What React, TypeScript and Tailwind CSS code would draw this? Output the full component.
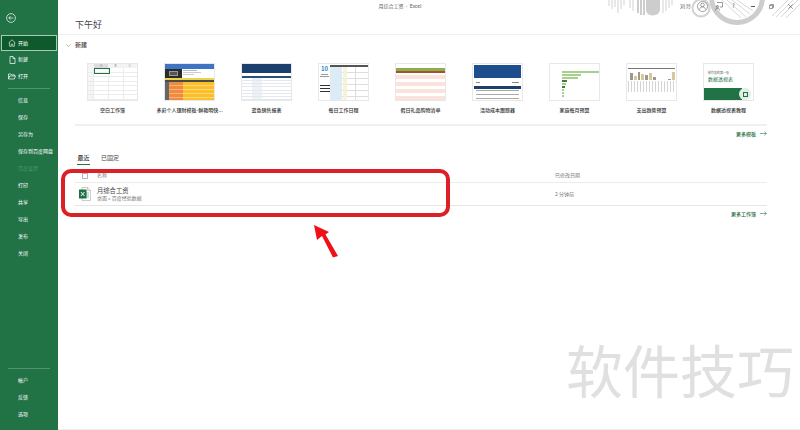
const cjk = "font-['Noto_Sans_CJK_SC','Noto_Sans',sans-serif]";

const topNav = ["新建", "打开"];
const midNav = ["信息", "保存", "另存为", "保存到百度网盘", "百度设置", "打印", "共享", "导出", "发布", "关闭"];
const bottomNav = ["帐户", "反馈", "选项"];

function Thumb({ children }: { children: React.ReactNode }) {
  return <div className="h-[38px] w-[51px] overflow-hidden border border-[#e8e8e8] bg-white">{children}</div>;
}

function BlankSheet() {
  return (
    <div className="relative flex h-full flex-col bg-white text-[3px] leading-[4px] text-[#888]">
      <div className="flex h-[4px] bg-[#f3f3f3] pl-[6px]">
        <span className="w-[15px] bg-[#dcdcdc] text-center">A</span>
        <span className="w-[15px] text-center">B</span>
        <span className="w-[15px] text-center">C</span>
      </div>
      <div className="grid flex-1 grid-cols-[6px_15px_15px_15px] grid-rows-7">
        {Array.from({ length: 28 }).map((_, i) => (
          <div key={i} className={`border-b border-r border-[#ececec] ${i % 4 === 0 ? "bg-[#f5f5f5]" : "bg-white"}`} />
        ))}
      </div>
      <div className="absolute left-[6px] top-[4px] h-[6px] w-[16px] border border-[#217346]" />
    </div>
  );
}

function BudgetSheet() {
  return (
    <div className="flex h-full flex-col bg-white">
      <div className="h-[5px] bg-[#3f73c4]" />
      <div className="flex h-[9px]">
        <div className="flex w-[17px] items-center justify-center bg-[#2b2b2b]">
          <div className="h-[5px] w-[9px] border border-[#999] bg-[#555]" />
        </div>
        <div className="flex flex-1 flex-col gap-px p-[1px]">
          <div className="h-px w-[14px] bg-[#bbb]" />
          <div className="h-px w-[18px] bg-[#ccc]" />
          <div className="h-px w-[11px] bg-[#ccc]" />
        </div>
      </div>
      <div className="h-[2px] bg-[#e9d44c]" />
      <div className="h-[2px] bg-[#4a4a4a]" />
      <div className="flex flex-1">
        <div className="w-[4px] bg-[#666]" />
        <div className="w-[14px] bg-[repeating-linear-gradient(180deg,#f08a3c_0,#f08a3c_3px,#f7b183_3px,#f7b183_4px)]" />
        <div className="flex-1 bg-[repeating-linear-gradient(180deg,#fbbf2c_0,#fbbf2c_3px,#fcd877_3px,#fcd877_4px)]" />
      </div>
    </div>
  );
}

function BlueReport() {
  return (
    <div className="flex h-full flex-col bg-white">
      <div className="h-[9px] bg-[#1c3f6e]" />
      <div className="h-[3px]" />
      <div className="h-[2px] bg-[#28507f]" />
      <div className="grid flex-1 grid-cols-5 grid-rows-7">
        {Array.from({ length: 35 }).map((_, i) => (
          <div key={i} className={`border-b border-[#e4e9f0] ${i % 5 === 1 ? "bg-[#eef1f5]" : ""}`} />
        ))}
      </div>
    </div>
  );
}

function DailySchedule() {
  return (
    <div className="flex h-full bg-white">
      <div className="flex w-[11px] flex-col items-center pt-[1px]">
        <span className="text-[6px] font-bold leading-[8px] text-[#1e88d0]">10</span>
        <div className="mt-[1px] h-px w-[7px] bg-[#999]" />
        <div className="mt-[1px] h-px w-[9px] bg-[#999]" />
        <div className="mt-[8px] h-px w-[10px] bg-[#333]" />
        <div className="mt-[2px] h-px w-[10px] bg-[#333]" />
        <div className="mt-[2px] h-px w-[10px] bg-[#333]" />
      </div>
      <div className="flex flex-1 flex-col pt-[1px]">
        <div className="h-[2px] bg-[#555]" />
        <div className="flex flex-1 bg-[repeating-linear-gradient(180deg,#fff_0,#fff_5px,#dddddd_5px,#dddddd_6px)]">
          <div className="w-[12px] bg-[#dcebf6]" />
          <div className="ml-[1px] w-[4px] bg-[#f5f3d8]" />
          <div className="ml-[8px] w-px bg-[#ddd]" />
        </div>
      </div>
    </div>
  );
}

function GiftList() {
  return (
    <div className="flex h-full flex-col bg-white pt-[4px]">
      <div className="h-[3px] bg-[#8ab04e]" />
      <div className="h-[2px] bg-[#a8502e]" />
      <div className="h-[2px]" />
      {Array.from({ length: 7 }).map((_, i) => (
        <div key={i} className={`h-[3.5px] ${i % 2 === 0 ? "bg-[#fbe3dd]" : "bg-white"}`} />
      ))}
    </div>
  );
}

function CostTracker() {
  return (
    <div className="flex h-full flex-col bg-white px-px pt-px">
      <div className="h-[13px] bg-[#1f4e8c]" />
      <div className="flex h-[8px] items-center justify-between px-[2px]">
        <div className="h-px w-[4px] bg-[#888]" />
        <div className="h-px w-[7px] bg-[#888]" />
      </div>
      <div className="h-[3px] bg-[#1c3f6e]" />
      <div className="flex flex-1 flex-col justify-around px-[2px]">
        <div className="h-px w-full bg-[#aaa]" />
        <div className="h-px w-full bg-[#aaa]" />
        <div className="h-px w-full bg-[#aaa]" />
      </div>
    </div>
  );
}

function BudgetChart() {
  const bars = [48, 24, 20, 6, 5, 4, 3, 3, 2];
  return (
    <div className="flex h-full flex-col bg-white pl-[12px] pt-[7px]">
      {bars.map((w, i) => (
        <div
          key={i}
          className={`mb-px h-[2px] ${i === 3 || i === 5 ? "bg-[#3f7d3a]" : "bg-[#a9cf8e]"}`}
          style={{ width: w * 0.78 }}
        />
      ))}
    </div>
  );
}

function TrendChart() {
  const bars = [7, 4, 8, 6, 5, 7, 3, 0, 0, 0, 1, 8];
  return (
    <div className="flex h-full flex-col bg-white px-[1px] pt-[4px]">
      <div className="h-px bg-[#777]" />
      <div className="flex h-[11px] items-end gap-px pl-[2px]">
        {bars.map((h, i) => (
          <div key={i} className={`w-[3px] ${i % 2 === 0 ? "bg-[#9a9a8c]" : "bg-[#d8c79d]"}`} style={{ height: h }} />
        ))}
      </div>
      <div className="mt-px h-[11px] bg-[repeating-linear-gradient(90deg,#d4d4d4_0,#d4d4d4_1px,#fff_1px,#fff_3px)]" />
    </div>
  );
}

function PivotTutorial() {
  return (
    <div className={`relative flex h-full flex-col bg-white ${cjk}`}>
      <div className="px-[4px] pt-[7px] text-[3px] leading-[4px] text-[#666]">制作您的第一张</div>
      <div className="px-[4px] text-[5px] leading-[7px] text-[#217346]">数据透视表</div>
      <div className="mt-auto h-[12px] w-[38px] bg-[#217346]" />
      <div className="absolute bottom-0 left-[35px] flex h-[12px] w-[12px] items-center justify-center rounded-full bg-[#dfeee6]">
        <div className="h-[5px] w-[5px] border border-[#217346]" />
      </div>
    </div>
  );
}

const templates = [
  { name: "空白工作簿", view: <BlankSheet /> },
  { name: "多彩个人理财模板-鲜艳明快...", view: <BudgetSheet /> },
  { name: "蓝色销售报表", view: <BlueReport /> },
  { name: "每日工作日程", view: <DailySchedule /> },
  { name: "假日礼品购物清单", view: <GiftList /> },
  { name: "活动成本跟踪器", view: <CostTracker /> },
  { name: "家庭每月预算", view: <BudgetChart /> },
  { name: "支出趋势预算", view: <TrendChart /> },
  { name: "数据透视表教程", view: <PivotTutorial /> },
];

function NavRow({ label, dim }: { label: string; dim?: boolean }) {
  return (
    <div className={`flex h-[17px] items-center pb-[2px] pl-[18px] text-[5px] ${dim ? "text-[#4f9270]" : "text-white"}`}>
      {label}
    </div>
  );
}

function NavIcon({ kind }: { kind: string }) {
  if (kind === "新建") {
    return (
      <svg width="7" height="8" viewBox="0 0 7 8" fill="none" stroke="#fff" strokeWidth="0.7" className="ml-[9px] mr-[2px]">
        <path d="M1 .5h3l2 2v5H1zM4 .5v2h2" />
      </svg>
    );
  }
  return (
    <svg width="8" height="7" viewBox="0 0 8 7" fill="none" stroke="#fff" strokeWidth="0.7" className="ml-[8px] mr-[2px]">
      <path d="M.5 6V1h2.5l.7.8H6.5V3M.5 6l1.2-3h5.8L6.3 6z" />
    </svg>
  );
}

function Sidebar() {
  return (
    <aside className="flex h-full w-[58px] shrink-0 flex-col bg-[#217346] text-white">
      <div className="flex h-[35px] items-center pl-[6px]">
        <svg width="10" height="10" viewBox="0 0 10 10" fill="none" stroke="#fff" strokeWidth="0.7">
          <circle cx="5" cy="5" r="4.4" />
          <path d="M7.3 5H2.8M4.6 3.1 2.7 5l1.9 1.9" />
        </svg>
      </div>
      <div className="mx-px flex h-[16px] items-center border border-[#a9c9b6] bg-[#0e5a2c] pb-px text-[5px]">
        <svg width="8" height="8" viewBox="0 0 8 8" fill="none" stroke="#fff" strokeWidth="0.6" className="ml-[6px] mr-[2px]">
          <path d="M.6 4 4 .8 7.4 4M1.6 3.4V7.3h1.7V5.2h1.4v2.1h1.7V3.4" />
        </svg>
        开始
      </div>
      {topNav.map((label) => (
        <div key={label} className="flex h-[17px] items-center text-[5px]">
          <NavIcon kind={label} />
          <span className="pb-[2px]">{label}</span>
        </div>
      ))}
      <div className="mx-[8px] my-[3px] h-px bg-[#4f9270]" />
      {midNav.map((label) => (
        <NavRow key={label} label={label} dim={label === "百度设置"} />
      ))}
      <div className="mt-auto" />
      <div className="mx-[8px] mb-[3px] h-px bg-[#4f9270]" />
      {bottomNav.map((label) => (
        <NavRow key={label} label={label} />
      ))}
      <div className="h-[7px]" />
    </aside>
  );
}

function MoreLink({ label }: { label: string }) {
  return (
    <div className="flex items-center justify-end gap-[4px] text-[5px] font-medium text-[#1d6b41]">
      {label}
      <svg width="7" height="5" viewBox="0 0 7 5" fill="none" stroke="#33704f" strokeWidth="0.6">
        <path d="M0 2.5h6.3M4.4.6l2 1.9-2 1.9" />
      </svg>
    </div>
  );
}

// Office title bar pattern: stripes, a ring behind the account icon, a hatched arc
function TitleArt() {
  return (
    <svg width="200" height="30" viewBox="0 0 200 30" fill="none" className="absolute right-0 top-0">
      <g stroke="#cdcdcd" strokeWidth="0.9">
        <path d="M9 0v6M12 0v9M15 0v7M18 0v13M21 0v9M24 0v5" />
        <path d="M30 0v8M33 0v11" />
      </g>
      <g stroke="#cdcdcd" strokeWidth="2">
        <path d="M38 0v13M41 0v15M44 0v15" />
      </g>
      <path d="M46 0h14v10q-1 5-7 5.5-7-.5-7-5.5z" fill="#cdcdcd" />
      <g stroke="#cdcdcd" strokeWidth="0.9">
        <path d="M63 0v13M66 0v11M69 0v8M72 0v5" />
      </g>
      <circle cx="101" cy="8" r="8.5" stroke="#d2d2d2" strokeWidth="2" />
      <circle cx="137" cy="-3" r="25.5" stroke="#cdcdcd" strokeWidth="5" />
      <g stroke="#d4d4d4" strokeWidth="0.9">
        <path d="M122 0 141 18M127 0 146 17M132 0 150 14M137 0 153 11" />
      </g>
      <g stroke="#d2d2d2" strokeWidth="0.9">
        <path d="M172 16 188 0M176 17 193 0M181 17 198 0M186 18 200 4" />
      </g>
    </svg>
  );
}

function WindowControls() {
  return (
    <div className="absolute right-[7px] top-0 flex h-[12px] items-center text-[#555]">
      <span className="mr-[6px] pb-px text-[5px]">刘 玲</span>
      <svg width="11" height="11" viewBox="0 0 11 11" fill="none" stroke="#666" strokeWidth="0.6" className="mr-[7px]">
        <circle cx="5.5" cy="5.5" r="5" />
        <circle cx="5.5" cy="4" r="1.8" />
        <path d="M2.5 8.5c.4-1.7 1.5-2.6 3-2.6s2.600.9 3 2.600" />
      </svg>
      <svg width="8" height="9" viewBox="0 0 8 9" fill="none" stroke="#555" strokeWidth="0.6" className="mr-[9px]">
        <path d="M2 .5h5.5v4.500H5M2 3.500v1.500M.5 8.500c0-1.500.7-2.200 2-2.200s2 .7 2 2.200" />
        <circle cx="2.5" cy="4.7" r="1.1" />
      </svg>
      <span className="mr-[16px] w-[3px] text-[6px] leading-none">?</span>
      <div className="mr-[14px] h-[0.7px] w-[4px] bg-[#555]" />
      <svg width="5" height="5" viewBox="0 0 5 5" fill="none" stroke="#555" strokeWidth="0.6" className="mr-[14px]">
        <path d="M.5 1.5h3v3h-3zM1.5 1.5v-1h3v3h-1" />
      </svg>
      <svg width="5" height="5" viewBox="0 0 5 5" fill="none" stroke="#555" strokeWidth="0.6">
        <path d="M.3.3l4.4 4.4M4.7.3.3 4.7" />
      </svg>
    </div>
  );
}

function ExcelFileIcon() {
  return (
    <svg width="12" height="14" viewBox="0 0 12 14" fill="none">
      <path d="M3 .5h5.5L11.5 3.5v10H3z" fill="#fff" stroke="#a7a7a7" strokeWidth="0.6" />
      <path d="M8.5.5v3h3" stroke="#a7a7a7" strokeWidth="0.6" />
      <path d="M7 6h3M7 8h3M7 10h3" stroke="#8fc3a5" strokeWidth="1" />
      <rect x="0" y="2.5" width="7.5" height="9" fill="#1c7145" />
      <path d="M1.9 5 5.500 9M5.500 5 1.900 9" stroke="#fff" strokeWidth="1" />
    </svg>
  );
}

export default function App() {
  return (
    <div className={`relative flex h-[430px] w-[800px] overflow-hidden bg-white ${cjk}`}>
      <Sidebar />
      <main className="flex h-full flex-1 flex-col border-b border-[#eeeeee]">
        <header className="h-[35px] border-b border-[#f1f1f1] pl-[17px] pt-[18px] text-[9px] leading-[14px] text-[#444]">
          下午好
        </header>
        <div className="flex items-center pl-[8px] pt-[6px] text-[6px] font-medium leading-[8px] text-[#444]">
          <svg width="5" height="3" viewBox="0 0 5 3" fill="none" stroke="#777" strokeWidth="0.5" className="mr-[4px]">
            <path d="M.4.4 2.5 2.5 4.6.4" />
          </svg>
          新建
        </div>
        <div className="ml-[29px] mt-[14px] flex w-[667px] justify-between">
          {templates.map((t) => (
            <div key={t.name} className="relative flex w-[51px] flex-col items-center">
              <Thumb>{t.view}</Thumb>
              <span className="mt-[5px] whitespace-nowrap text-[5px] font-medium leading-[7px] text-[#333]">
                {t.name}
              </span>
            </div>
          ))}
        </div>
        <div className="ml-[17px] mt-[11px] w-[692px]">
          <div className="h-[1.5px] bg-[#f0f0f0]" />
          <div className="mt-[4px] leading-[8px]">
            <MoreLink label="更多模板" />
          </div>
          <div className="mt-[15px] flex gap-[11px] pl-[2px] text-[6px] leading-[9px] text-[#444]">
            <div className="flex w-[13px] flex-col items-center font-medium text-[#333]">
              <span className="whitespace-nowrap">最近</span>
              <div className="mt-[2px] h-[1px] w-[13px] bg-[#217346]" />
            </div>
            <span>已固定</span>
          </div>
          <div className="mt-[6px] flex h-[12px] items-center border-b border-[#ececec] text-[5px] text-[#777]">
            <div className="ml-[7px] h-[6px] w-[6px] border border-[#b5b5b5]" />
            <span className="ml-[9px] pb-[2px]">名称</span>
            <span className="ml-[448px] pb-[2px]">已修改日期</span>
          </div>
          <div className="flex h-[23px] items-center border-b border-[#e6e6e6]">
            <div className="ml-[4px]">
              <ExcelFileIcon />
            </div>
            <div className="ml-[6px] flex w-[458px] flex-col">
              <span className="text-[6.3px] leading-[8px] text-[#444]">月综合工资</span>
              <span className="text-[5px] leading-[6px] text-[#777]">桌面 » 百度经验数据</span>
            </div>
            <span className="text-[5px] text-[#777]">2 分钟前</span>
          </div>
          <div className="mt-[4px] leading-[8px]">
            <MoreLink label="更多工作簿" />
          </div>
        </div>
      </main>
      <TitleArt />
      <WindowControls />
      <div className="absolute left-[58px] right-0 top-0 flex h-[12px] items-center justify-center pb-px text-[5px] text-[#555]">
        <span className="-translate-x-[29px]">月综合工资 &nbsp;-&nbsp; Excel</span>
      </div>
      <div className="absolute left-[61px] top-[169px] h-[48px] w-[389px] rounded-[10px] border-4 border-[#dc2027]" />
      <svg width="30" height="38" viewBox="0 0 30 38" className="absolute left-[312px] top-[223px]">
        <path d="M2 2 17 9 13.500 11.500 26 33 21 34.500 10 13 5 17z" fill="#ee1118" />
      </svg>
      <div className="absolute left-[566px] top-[327px] text-[57px] leading-[82px] text-[#e0e0e0]">软件技巧</div>
    </div>
  );
}
